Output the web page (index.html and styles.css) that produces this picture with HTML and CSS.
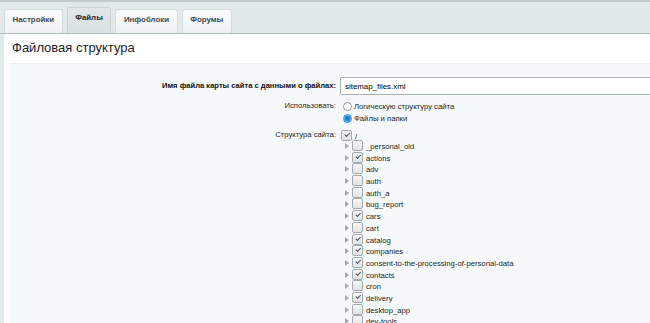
FILE: index.html
```html
<!DOCTYPE html>
<html lang="ru">
<head>
  <meta charset="UTF-8">
  <title>Файловая структура</title>
  <link rel="stylesheet" href="styles.css">
</head>
<body>
  <div class="tabs">
    <div class="tab">Настройки</div>
    <div class="tab active">Файлы</div>
    <div class="tab">Инфоблоки</div>
    <div class="tab">Форумы</div>
  </div>

  <div class="panel">
    <div class="panel-title">Файловая структура</div>
    <div class="panel-body">
      <div class="row row-name">
        <div class="label">Имя файла карты сайта с данными о файлах:</div>
        <div class="field"><input class="text-input" type="text" value="sitemap_files.xml"></div>
      </div>
      <div class="row row-use">
        <div class="label">Использовать:</div>
        <div class="field">
          <label class="radio"><span class="radio-dot"></span>Логическую структуру сайта</label>
          <label class="radio"><span class="radio-dot checked"></span>Файлы и папки</label>
        </div>
      </div>
      <div class="row row-tree">
        <div class="label">Структура сайта:</div>
        <div class="field">
          <div class="root"><span class="cb checked"></span>/</div>
          <ul class="tree">
            <li><span class="arrow"></span><span class="cb"></span>_personal_old</li>
            <li><span class="arrow"></span><span class="cb checked"></span>actions</li>
            <li><span class="arrow"></span><span class="cb"></span>adv</li>
            <li><span class="arrow"></span><span class="cb"></span>auth</li>
            <li><span class="arrow"></span><span class="cb"></span>auth_a</li>
            <li><span class="arrow"></span><span class="cb"></span>bug_report</li>
            <li><span class="arrow"></span><span class="cb checked"></span>cars</li>
            <li><span class="arrow"></span><span class="cb"></span>cart</li>
            <li><span class="arrow"></span><span class="cb checked"></span>catalog</li>
            <li><span class="arrow"></span><span class="cb checked"></span>companies</li>
            <li><span class="arrow"></span><span class="cb checked"></span>consent-to-the-processing-of-personal-data</li>
            <li><span class="arrow"></span><span class="cb checked"></span>contacts</li>
            <li><span class="arrow"></span><span class="cb"></span>cron</li>
            <li><span class="arrow"></span><span class="cb checked"></span>delivery</li>
            <li><span class="arrow"></span><span class="cb"></span>desktop_app</li>
            <li><span class="arrow"></span><span class="cb"></span>dev-tools</li>
          </ul>
        </div>
      </div>
    </div>
  </div>
</body>
</html>
```

FILE: styles.css
```css
html {
  overflow: hidden;
  height: 323px;
}
body {
  margin: 0;
  background-color: #e1e9ea;
  border-top: 2px solid #c3cbcf;
  font-family: "Liberation Sans", Arial, sans-serif;
  font-size: 7.7px;
  color: #262626;
  overflow: hidden;
  height: 321px;
}

/* Tabs */
.tabs {
  display: flex;
  align-items: flex-end;
  gap: 4px;
  padding-left: 4px;
  height: 32px;
  box-sizing: border-box;
  border-bottom: 1px solid #b2b9bd;
}
.tab {
  height: 24px;
  line-height: 20px;
  padding: 0 7.5px;
  background: linear-gradient(#fbfcfc, #eef2f3);
  border: 1px solid #d5dcde;
  border-bottom: none;
  border-radius: 3px 3px 0 0;
  color: #3f4b54;
  font-weight: bold;
  font-size: 7.9px;
  box-sizing: border-box;
}
.tab.active {
  height: 26px;
  line-height: 20px;
  background: linear-gradient(#e1e7e9, #d9e0e2);
  border-color: #cbd3d6;
  color: #1f2a30;
}

/* Panel */
.panel {
  margin-left: 4px;
  background-color: #fff;
  padding-left: 6px;
  height: 289px;
  overflow: hidden;
}
.panel-title {
  font-size: 13px;
  color: #1d2329;
  padding: 6px 0 0 2px;
  height: 23px;
  line-height: 15px;
}
.panel-body {
  background-color: #f5f9f9;
  border-top: 1px solid #eaeff0;
  padding-top: 13px;
  height: 252px;
}

.row {
  display: flex;
}
.label {
  flex: 0 0 326px;
  text-align: right;
  padding-right: 4px;
}
.field {
  flex: 1;
  min-width: 0;
}

.row-name .label {
  line-height: 18px;
  font-weight: bold;
  font-size: 7.6px;
  color: #111;
}
.row-use {
  margin-top: 5px;
}
.row-use .label {
  line-height: 12px;
}
.row-tree {
  margin-top: 6px;
}
.row-tree .label {
  line-height: 10px;
}

.text-input {
  display: block;
  width: 340px;
  height: 18px;
  box-sizing: border-box;
  border: 1px solid #a8b2b6;
  border-radius: 2px;
  padding: 0 4px;
  font-family: "Liberation Sans", Arial, sans-serif;
  font-size: 7.9px;
  color: #000;
  background: #fff;
}

/* Radios */
.radio {
  display: flex;
  align-items: center;
  height: 12px;
}
.radio-dot {
  width: 7px;
  height: 7px;
  border: 1px solid #8e979b;
  border-radius: 50%;
  background: #fff;
  margin: 0 2px 0 3px;
}
.radio-dot.checked {
  background: radial-gradient(circle, #1a84e0 0 2.3px, #86bdee 3.3px);
  border-color: #3b8fd6;
}

/* Checkboxes */
.cb {
  display: inline-block;
  width: 9px;
  height: 9px;
  border: 1px solid #a3abaf;
  border-radius: 2px;
  background: linear-gradient(#f6f7f7, #e0e3e4);
  margin-right: 3px;
  position: relative;
  vertical-align: -2px;
}
.cb.checked::after {
  content: "";
  position: absolute;
  left: 2px;
  top: 1px;
  width: 4px;
  height: 2px;
  border-left: 1px solid #4b5257;
  border-bottom: 1px solid #4b5257;
  transform: rotate(-45deg) translate(0, 1px);
}
.root {
  height: 10px;
  line-height: 10px;
  padding-left: 1px;
}

/* Tree */
.tree {
  list-style: none;
  margin: 0;
  padding: 0 0 0 5px;
}
.tree li {
  height: 11.7px;
  line-height: 11.7px;
  white-space: nowrap;
}
.arrow {
  display: inline-block;
  width: 0;
  height: 0;
  border-left: 4px solid #a0a8ac;
  border-top: 3px solid transparent;
  border-bottom: 3px solid transparent;
  margin-right: 3px;
}
```
